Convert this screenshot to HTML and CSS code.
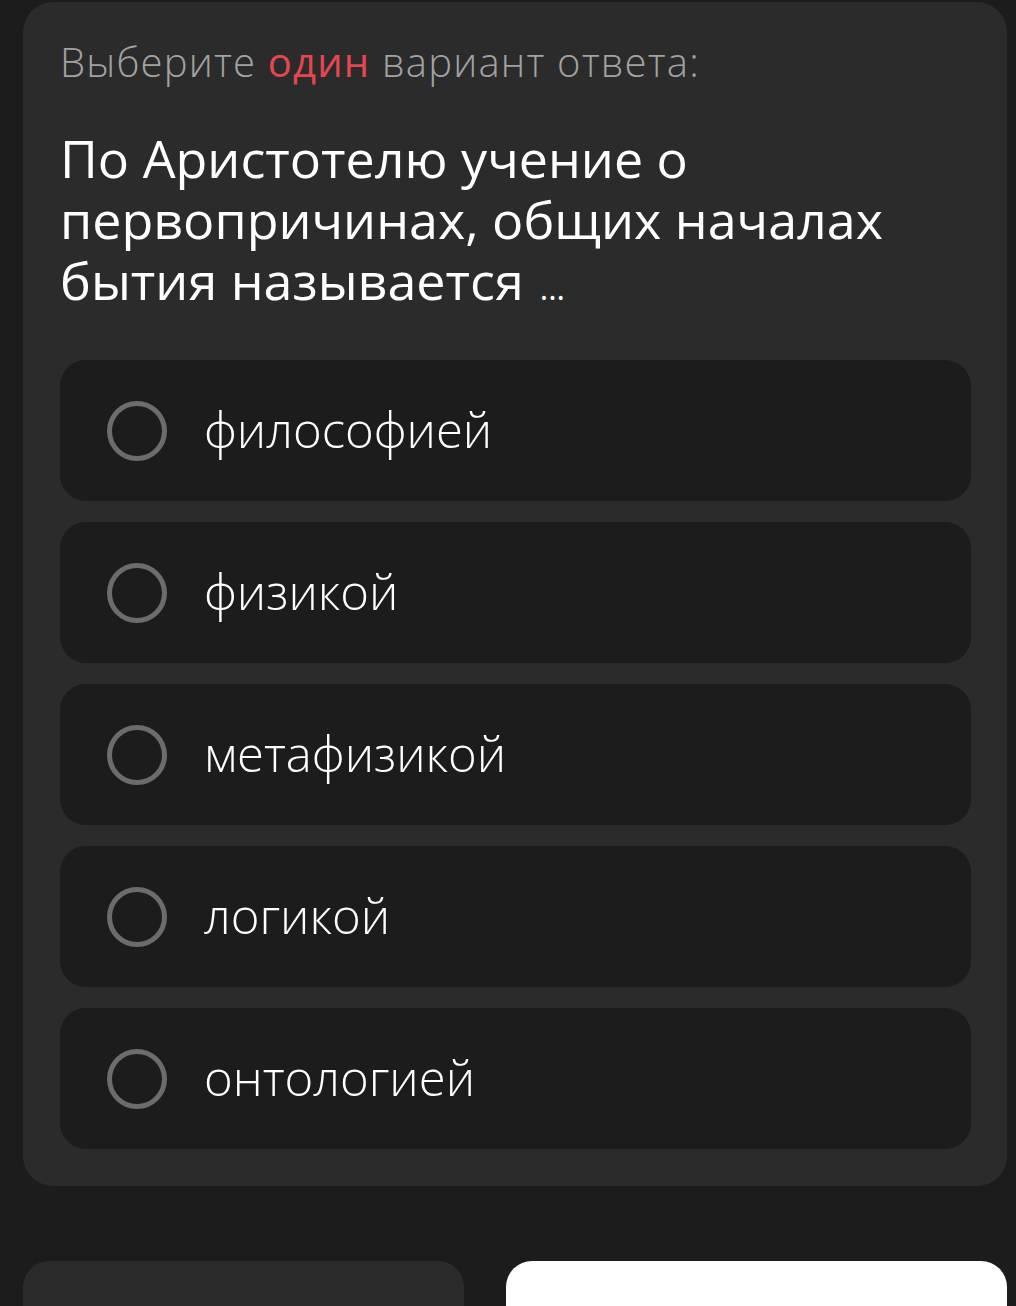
FILE: index.html
```html
<!DOCTYPE html>
<html lang="ru">
<head>
<meta charset="utf-8">
<link rel="stylesheet" href="styles.css">
</head>
<body>
<div class="page">
  <section class="card">
    <p class="hint">Выберите <span class="accent">один</span> вариант ответа:</p>
    <h1 class="question">По Аристотелю учение о первопричинах, общих началах бытия называется<span class="dots">...</span></h1>
    <ul class="options">
      <li class="option"><span class="radio"></span><span class="label">философией</span></li>
      <li class="option"><span class="radio"></span><span class="label">физикой</span></li>
      <li class="option"><span class="radio"></span><span class="label">метафизикой</span></li>
      <li class="option"><span class="radio"></span><span class="label">логикой</span></li>
      <li class="option"><span class="radio"></span><span class="label">онтологией</span></li>
    </ul>
  </section>
  <div class="actions">
    <div class="btn btn-secondary"></div>
    <div class="btn btn-primary"></div>
  </div>
</div>
</body>
</html>
```

FILE: styles.css
```css
* { box-sizing: border-box; }
html, body {
  margin: 0;
  padding: 0;
  background: #1c1c1c;
  height: 100%;
  overflow: hidden;
}
body {
  font-family: "Open Sans", "Liberation Sans", sans-serif;
  color: #ffffff;
}
.page {
  padding: 2px 9px 0 23px;
}
.card {
  background: #2b2b2b;
  border-radius: 30px;
  padding: 34px 36px 37px 37px;
}
.hint {
  margin: 0;
  font-size: 40px;
  font-weight: 300;
  letter-spacing: 1.2px;
  line-height: 52px;
  color: #a2a2a2;
}
.accent { color: #e5464f; font-weight: 400; }
.question {
  margin: 39px 0 0 0;
  font-size: 52px;
  font-weight: 400;
  line-height: 61px;
  color: #ffffff;
}
.dots {
  display: inline-block;
  font-size: 32px;
  line-height: 1;
  margin-left: 16px;
}
.options {
  list-style: none;
  margin: 50px 0 0 0;
  padding: 0;
  display: flex;
  flex-direction: column;
  gap: 21px;
}
.option {
  height: 141px;
  background: #1c1c1c;
  border-radius: 26px;
  display: flex;
  align-items: center;
  padding-left: 47px;
}
.radio {
  width: 60px;
  height: 60px;
  border: 5px solid #6c6c6c;
  border-radius: 50%;
  flex: none;
}
.label {
  margin-left: 37px;
  font-size: 49px;
  font-weight: 300;
  color: #ffffff;
  padding-bottom: 4px;
}
.actions {
  display: flex;
  gap: 42px;
  margin-top: 75px;
}
.btn {
  height: 100px;
  border-radius: 26px;
}
.btn-secondary {
  width: 441px;
  background: #2b2b2b;
}
.btn-primary {
  flex: 1;
  background: #ffffff;
}
```
